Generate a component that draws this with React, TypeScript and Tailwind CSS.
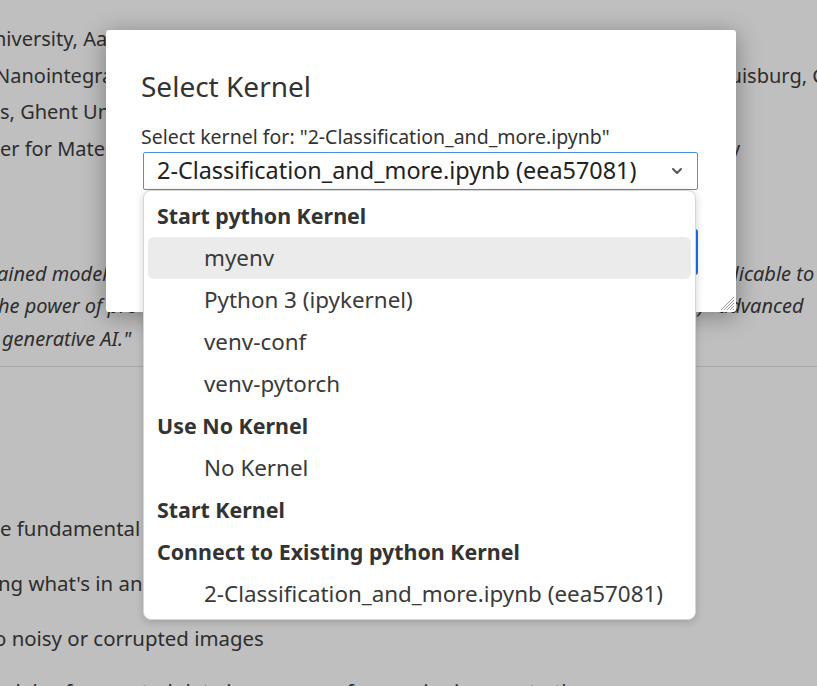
import React from 'react';

const FONT = "font-['Noto_Sans',_'Open_Sans',_sans-serif]";

interface KernelRow {
  label: string;
  header?: boolean;
  active?: boolean;
}

const rows: KernelRow[] = [
  { label: 'Start python Kernel', header: true },
  { label: 'myenv', active: true },
  { label: 'Python 3 (ipykernel)' },
  { label: 'venv-conf' },
  { label: 'venv-pytorch' },
  { label: 'Use No Kernel', header: true },
  { label: 'No Kernel' },
  { label: 'Start Kernel', header: true },
  { label: 'Connect to Existing python Kernel', header: true },
  { label: '2-Classification_and_more.ipynb (eea57081)' },
];

// page text that sits behind the modal
const BackgroundPage: React.FC = () => (
  <div className="pt-[21px] text-[20px] text-[#3d3d3d]">
    <div className="leading-[36.7px]">
      <div className="flex whitespace-nowrap">
        <span className="ml-[-6px]">niversity, Aalto, Finland</span>
      </div>
      <div className="flex whitespace-nowrap">
        <div className="w-[715px] shrink-0 overflow-hidden">
          <span className="ml-[-5px]">Nanointegration Center</span>
        </div>
        <span>Duisburg, Germany</span>
      </div>
      <div className="flex whitespace-nowrap">
        <span>s, Ghent University, Belgium</span>
      </div>
      <div className="flex whitespace-nowrap">
        <div className="w-[730px] shrink-0 overflow-hidden">
          <span>er for Materials</span>
        </div>
        <span>y</span>
      </div>
    </div>

    <div className="mt-[90px] italic leading-[32.5px]">
      <div className="flex whitespace-nowrap">
        <div className="w-[722px] shrink-0 overflow-hidden">
          <span className="ml-[-3px]">ained models</span>
        </div>
        <span>plicable to</span>
      </div>
      <div className="flex whitespace-nowrap">
        <div className="w-[698px] shrink-0 overflow-hidden">
          <span className="ml-[-2px]">he power of pre-trained models</span>
        </div>
        <span>)</span>
        <span className="ml-[14px]">advanced</span>
      </div>
      <div className="flex whitespace-nowrap">
        <span className="ml-[2px]">generative AI."</span>
      </div>
    </div>

    <div className="mt-[11px] h-px bg-[#e0e0e0]" />

    <ul className="mt-[146px] text-[20.4px] leading-[30px] whitespace-nowrap">
      <li className="mb-[25px]">e fundamental concepts</li>
      <li className="mb-[25px] ml-[-2px]">ng what's in an image</li>
      <li className="mb-[23px] ml-[-6px]">o noisy or corrupted images</li>
      <li className="ml-[-4px]">odels of corrupted data in sequence from noisy images to the</li>
    </ul>
  </div>
);

const Chevron: React.FC = () => (
  <svg width="16" height="16" viewBox="0 0 16 16" fill="none" stroke="#555" strokeWidth="2" strokeLinecap="round" strokeLinejoin="round">
    <path d="M4 6l4 4 4-4" />
  </svg>
);

const ResizeGrip: React.FC = () => (
  <svg width="15" height="15" viewBox="0 0 15 15" stroke="#9a9a9a" strokeWidth="1">
    <path d="M14 1L1 14M14 4L4 14M14 7L7 14M14 10L10 14M14 13L13 14" />
  </svg>
);

const KernelDialog: React.FC = () => (
  <div className="absolute left-[106px] top-[30px] flex h-[282px] w-[630px] flex-col rounded-[3px] bg-white pl-[35px] pr-[38px] pt-[38px] shadow-[0_4px_24px_rgba(0,0,0,0.35)]">
    <h2 className="text-[28px] leading-[36px] text-[#333]">Select Kernel</h2>
    <label className="mt-[21px] text-[19.5px] leading-[24px] text-[#333]">
      Select kernel for: "2-Classification_and_more.ipynb"
    </label>
    <div className="ml-[2px] mt-[3px] flex h-[38px] items-center justify-between rounded-[2px] border border-[#4a90e2] pl-[13px] pr-[12px] text-[23.4px] text-[#222]">
      <span>2-Classification_and_more.ipynb (eea57081)</span>
      <Chevron />
    </div>
    <div className="mt-[39px] flex justify-end">
      <button className="h-[46px] w-[90px] rounded-[3px] bg-[#1a73e8] text-white">Select</button>
    </div>
    <div className="absolute bottom-[1px] right-[1px]">
      <ResizeGrip />
    </div>

    <div className="absolute left-[37px] top-[160px] w-[553px] rounded-[8px] border border-[#d6d6d6] bg-white p-[4px] shadow-[0_2px_8px_rgba(0,0,0,0.18)]">
      {rows.map((row, i) => (
        <div
          key={i}
          className={`flex h-[42px] items-center whitespace-nowrap rounded-[6px] ${
            row.header
              ? 'pl-[9px] text-[21.4px] font-bold text-[#333]'
              : 'pl-[56px] text-[22.4px] text-[#3a3a3a]'
          } ${row.active ? 'bg-[#ebebeb]' : ''}`}
        >
          {row.label}
        </div>
      ))}
    </div>
  </div>
);

export default function App() {
  return (
    <div className={`relative h-[686px] w-[817px] overflow-hidden bg-white ${FONT}`}>
      <BackgroundPage />
      <div className="absolute inset-0 bg-black/25" />
      <KernelDialog />
    </div>
  );
}
